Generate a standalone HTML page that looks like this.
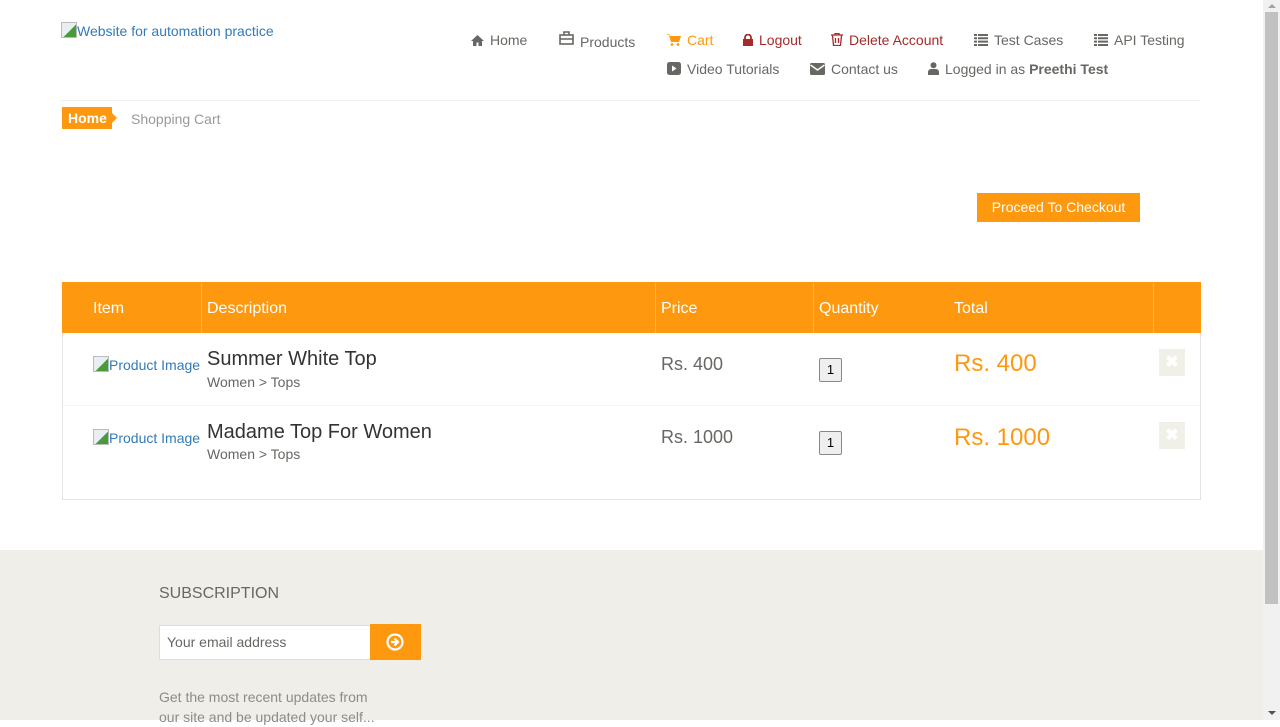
<!DOCTYPE html>
<html><head><meta charset="utf-8"><style>
*{margin:0;padding:0;box-sizing:border-box}
body{width:1280px;height:720px;overflow:hidden;background:#fff;font-family:"Liberation Sans",Arial,sans-serif;position:relative}
.a{position:absolute;white-space:nowrap}
.nav{font-size:14px;color:#696763}
.nav svg{vertical-align:-1px;margin-right:6px}
.bi{display:inline-block;width:16px;height:16px;border:1px solid #bbb;background:linear-gradient(135deg,#e8eef4 55%,#4a9a3a 56%);vertical-align:-2px}
.th{color:#fff;font-size:16px;top:300px}
</style></head><body>
<div class="a" style="left:61px;top:22px;font-size:14px;color:#337ab7"><span class="bi"></span>Website for automation practice</div>

<div class="a nav" style="left:471px;top:32px"><svg width="13" height="11" viewBox="0 0 13 11"><path d="M6.5 0L0 6h2v5h3.5V7.5h2V11H11V6h2z" fill="#696763"/></svg>Home</div>
<div class="a nav" style="left:559px;top:31px"><svg width="15" height="14" viewBox="0 0 15 14"><rect x="1" y="4" width="13" height="9" fill="none" stroke="#696763" stroke-width="1.6"/><path d="M5 4V1h5v3M1 8h13" stroke="#696763" stroke-width="1.6" fill="none"/></svg><span style="position:relative;top:3px">Products</span></div>
<div class="a nav" style="left:666px;top:32px;color:#FE980F"><svg width="15" height="12" viewBox="0 0 15 12"><path d="M0 0h3l1 2h11l-2 6H5L3 1" fill="#FE980F"/><circle cx="6" cy="10.5" r="1.4" fill="#FE980F"/><circle cx="12" cy="10.5" r="1.4" fill="#FE980F"/></svg>Cart</div>
<div class="a nav" style="left:743px;top:32px;color:#a52a2a"><svg width="10" height="12" viewBox="0 0 10 12"><path d="M2 5V3.5a3 3 0 016 0V5" stroke="#a52a2a" stroke-width="1.8" fill="none"/><rect x="0" y="5" width="10" height="7" fill="#a52a2a"/></svg>Logout</div>
<div class="a nav" style="left:831px;top:32px;color:#a52a2a"><svg width="12" height="13" viewBox="0 0 12 13"><path d="M0 2h12M4 2V0.5h4V2M1.5 2.5l1 10h7l1-10M4.5 5v5M7.5 5v5" stroke="#a52a2a" stroke-width="1.3" fill="none"/></svg>Delete Account</div>
<div class="a nav" style="left:974px;top:32px"><svg width="14" height="12" viewBox="0 0 14 12"><path d="M0 1h3M4 1h10M0 4.3h3M4 4.3h10M0 7.6h3M4 7.6h10M0 11h3M4 11h10" stroke="#696763" stroke-width="2"/></svg>Test Cases</div>
<div class="a nav" style="left:1094px;top:32px"><svg width="14" height="12" viewBox="0 0 14 12"><path d="M0 1h3M4 1h10M0 4.3h3M4 4.3h10M0 7.6h3M4 7.6h10M0 11h3M4 11h10" stroke="#696763" stroke-width="2"/></svg>API Testing</div>
<div class="a nav" style="left:667px;top:61px"><svg width="14" height="13" viewBox="0 0 14 13"><rect width="14" height="13" rx="2.5" fill="#696763"/><path d="M5 3.5v6l4.5-3z" fill="#fff"/></svg>Video Tutorials</div>
<div class="a nav" style="left:810px;top:61px"><svg width="15" height="12" viewBox="0 0 15 12"><rect width="15" height="12" rx="1.5" fill="#696763"/><path d="M0.5 2l7 5 7-5" stroke="#fff" stroke-width="1.4" fill="none"/></svg>Contact us</div>
<div class="a nav" style="left:928px;top:61px"><svg width="11" height="13" viewBox="0 0 11 13"><circle cx="5.5" cy="3.2" r="3" fill="#696763"/><path d="M0 13v-3a3 3 0 013-3h5a3 3 0 013 3v3z" fill="#696763"/></svg>Logged in as <b>Preethi Test</b></div>

<div class="a" style="left:61px;top:100px;width:1139px;border-top:1px solid #f0f0ee"></div>
<div class="a" style="left:62px;top:107px;width:50px;height:22px;background:#FE980F;color:#fff;font-size:14px;font-weight:bold;line-height:22px;padding-left:6px">Home</div>
<div class="a" style="left:112px;top:113px;border-left:5px solid #FE980F;border-top:5px solid transparent;border-bottom:5px solid transparent"></div>
<div class="a" style="left:131px;top:111px;font-size:14px;color:#999">Shopping Cart</div>

<div class="a" style="left:977px;top:193px;width:163px;height:29px;background:#FE980F;color:#fff;font-size:14px;line-height:29px;text-align:center">Proceed To Checkout</div>

<div class="a" style="left:62px;top:282px;width:1139px;height:218px;border:1px solid #e6e4df"></div>
<div class="a" style="left:62px;top:282px;width:1139px;height:51px;background:#FE980F"></div>
<div class="a" style="left:201px;top:283px;height:50px;border-left:1px solid #fdb35a"></div>
<div class="a" style="left:655px;top:283px;height:50px;border-left:1px solid #fdb35a"></div>
<div class="a" style="left:813px;top:283px;height:50px;border-left:1px solid #fdb35a"></div>
<div class="a" style="left:1153px;top:283px;height:50px;border-left:1px solid #fdb35a"></div>
<div class="a th" style="left:93px">Item</div>
<div class="a th" style="left:207px">Description</div>
<div class="a th" style="left:661px">Price</div>
<div class="a th" style="left:819px">Quantity</div>
<div class="a th" style="left:954px">Total</div>
<div class="a" style="left:63px;top:405px;width:1137px;border-top:1px solid #f5f5ef"></div>

<div class="a" style="left:93px;top:356px;font-size:14px;color:#337ab7"><span class="bi"></span>Product Image</div>
<div class="a" style="left:207px;top:348px;font-size:20px;color:#333">Summer White Top</div>
<div class="a" style="left:207px;top:374px;font-size:14px;color:#696763">Women &gt; Tops</div>
<div class="a" style="left:661px;top:354px;font-size:18px;color:#696763">Rs. 400</div>
<div class="a" style="left:819px;top:358px;width:23px;height:24px;border:1px solid #888;border-radius:2px;background:#efefef;font-size:13px;text-align:center;line-height:22px">1</div>
<div class="a" style="left:954px;top:350px;font-size:24px;color:#FE980F">Rs. 400</div>
<div class="a" style="left:1159px;top:349px;width:26px;height:27px;background:#F0F0E9;color:#fff;font-size:16px;font-weight:bold;text-align:center;line-height:27px">✖</div>

<div class="a" style="left:93px;top:429px;font-size:14px;color:#337ab7"><span class="bi"></span>Product Image</div>
<div class="a" style="left:207px;top:421px;font-size:20px;color:#333">Madame Top For Women</div>
<div class="a" style="left:207px;top:446px;font-size:14px;color:#696763">Women &gt; Tops</div>
<div class="a" style="left:661px;top:427px;font-size:18px;color:#696763">Rs. 1000</div>
<div class="a" style="left:819px;top:431px;width:23px;height:24px;border:1px solid #888;border-radius:2px;background:#efefef;font-size:13px;text-align:center;line-height:22px">1</div>
<div class="a" style="left:954px;top:424px;font-size:24px;color:#FE980F">Rs. 1000</div>
<div class="a" style="left:1159px;top:422px;width:26px;height:27px;background:#F0F0E9;color:#fff;font-size:16px;font-weight:bold;text-align:center;line-height:27px">✖</div>

<div class="a" style="left:0;top:550px;width:1264px;height:170px;background:#efeee8"></div>
<div class="a" style="left:0;top:549px;width:44px;border-top:1px solid #fff"></div>
<div class="a" style="left:159px;top:585px;font-size:16px;color:#696763">SUBSCRIPTION</div>
<div class="a" style="left:159px;top:625px;width:212px;height:35px;background:#fff;border:1px solid #ddd;font-size:14px;color:#696763;line-height:33px;padding-left:7px">Your email address</div>
<div class="a" style="left:370px;top:624px;width:51px;height:36px;background:#FE980F"><svg style="position:absolute;left:16px;top:9px" width="18" height="18" viewBox="0 0 18 18"><circle cx="9" cy="9" r="7.5" fill="none" stroke="#fff" stroke-width="2.2"/><path d="M5 9h6M8.5 5.5L12 9l-3.5 3.5" stroke="#fff" stroke-width="2.2" fill="none"/></svg></div>
<div class="a" style="left:159px;top:687px;font-size:14px;color:#8c8c88;line-height:20px;white-space:normal;width:230px">Get the most recent updates from our site and be updated your self...</div>

<div class="a" style="left:1263px;top:0;width:17px;height:720px;background:#f1f1f1"></div>
<div class="a" style="left:1265px;top:12px;width:13px;height:592px;background:#c1c1c1"></div>
<div class="a" style="left:1268px;top:4px;border-bottom:4px solid #a3a3a3;border-left:4px solid transparent;border-right:4px solid transparent"></div>
<div class="a" style="left:1268px;top:711px;border-top:4px solid #505050;border-left:4px solid transparent;border-right:4px solid transparent"></div>
</body></html>
